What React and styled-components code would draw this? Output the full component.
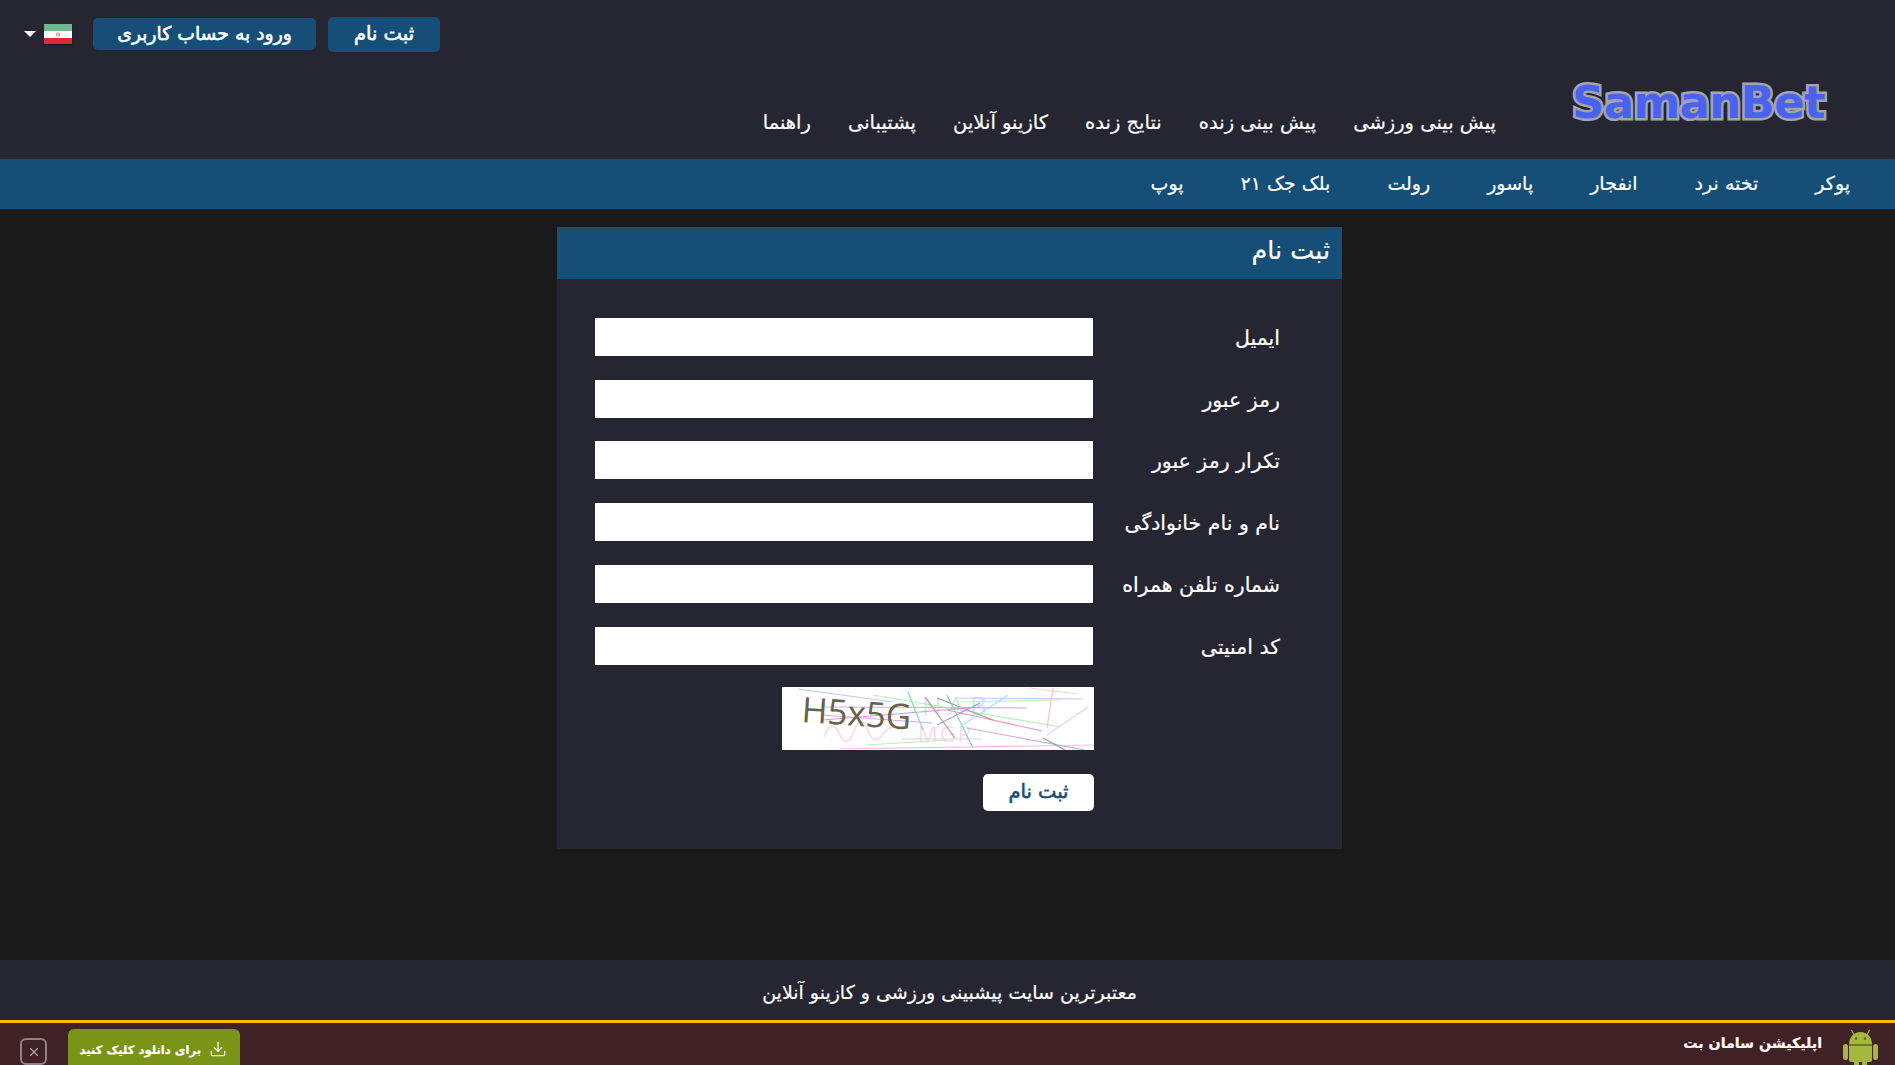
import React from 'react';
import styled, { createGlobalStyle } from 'styled-components';
import { Download, X } from 'lucide-react';

const GlobalStyle = createGlobalStyle`
  html, body {
    margin: 0;
    padding: 0;
    height: 100%;
    background: #1a1a1a;
    overflow: hidden;
  }
  * {
    box-sizing: border-box;
  }
  #root {
    height: 100%;
  }
`;

const Page = styled.div`
  display: flex;
  flex-direction: column;
  height: 100vh;
  direction: rtl;
  font-family: "DejaVu Sans", "Noto Sans", sans-serif;
  color: #fff;
  -webkit-text-stroke: 0.2px currentColor;
`;

const Header = styled.header`
  background: #262633;
  height: 159px;
  display: flex;
  flex-direction: column;
`;

const TopBar = styled.div`
  direction: ltr;
  display: flex;
  align-items: center;
  height: 68px;
  padding-left: 24px;
`;

const Caret = styled.span`
  width: 0;
  height: 0;
  border-left: 6px solid transparent;
  border-right: 6px solid transparent;
  border-top: 6px solid #fff;
  margin-right: 8px;
`;

const FlagIcon = styled.svg`
  width: 28px;
  height: 20px;
  margin-right: 21px;
  box-shadow: 0 1px 1px rgba(0, 0, 0, 0.4);
`;

const TopButton = styled.a`
  direction: rtl;
  display: flex;
  align-items: center;
  justify-content: center;
  width: ${props => props.$w}px;
  height: ${props => props.$h}px;
  margin-right: ${props => props.$gap}px;
  padding-bottom: 2px;
  background: #154f78;
  border-radius: 5px;
  font-size: ${props => props.$size}px;
  -webkit-text-stroke: 0.6px #fff;
`;

const MainRow = styled.div`
  display: flex;
  align-items: flex-start;
  height: 91px;
  padding-right: 67px;
`;

const Logo = styled.div`
  direction: ltr;
  width: 256px;
  margin-top: 12px;
  font-size: 45px;
  line-height: 46px;
  font-weight: 700;
  letter-spacing: -0.7px;
  color: #4a63ee;
  -webkit-text-stroke: 5px #a3a3ae;
  paint-order: stroke fill;
`;

const MainNav = styled.nav`
  display: flex;
  gap: 37px;
  margin-right: 76px;
  margin-top: 41px;
  font-size: 19.5px;
  line-height: 28px;
`;

const SubNav = styled.nav`
  display: flex;
  align-items: center;
  gap: 57px;
  height: 50px;
  padding: 0 45px 2px 0;
  background: #154f78;
  font-size: 19px;
`;

const Main = styled.main`
  flex: 1;
  display: flex;
  justify-content: center;
  align-items: flex-start;
  padding: 18px 0 0 4px;
`;

const Panel = styled.section`
  width: 785px;
  height: 622px;
  background: #262633;
`;

const PanelTitle = styled.h1`
  margin: 0;
  height: 52px;
  padding: 0 12px;
  background: #154f78;
  font-size: 25.5px;
  font-weight: 400;
  line-height: 46px;
`;

const Form = styled.form`
  display: flex;
  flex-direction: column;
  padding: 38.9px 62px 0 0;
`;

const Row = styled.label`
  display: flex;
  align-items: center;
  height: 38px;
  margin-bottom: 23.75px;
`;

const RowLabel = styled.span`
  width: 187px;
  padding-top: 2px;
  font-size: 20.5px;
`;

const Input = styled.input`
  width: 498px;
  height: 38px;
  border: 0;
  background: #fff;
`;

const CaptchaRow = styled.div`
  display: flex;
  padding-right: 186px;
  margin: -1.4px 0 24px;
`;

const CaptchaImage = styled.svg`
  display: block;
  width: 312px;
  height: 63px;
  background: #fff;
  -webkit-text-stroke: 0;
`;

const SubmitRow = styled.div`
  padding-right: 186px;
`;

const Submit = styled.button`
  width: 111px;
  height: 37px;
  padding: 0 0 3px;
  border: 0;
  border-radius: 5px;
  background: #fff;
  color: #154f78;
  font-family: inherit;
  font-size: 19.5px;
  -webkit-text-stroke: 0.6px #154f78;
`;

const Footer = styled.footer`
  background: #262633;
  height: 60px;
  display: flex;
  align-items: center;
  justify-content: center;
  padding: 4px 0 0 4px;
  font-size: 19px;
`;

const AppBar = styled.div`
  flex: none;
  height: 45px;
  border-top: 3px solid #ffb900;
  background: #3f2126;
  display: flex;
  overflow: hidden;
  padding: 0 17px 0 20px;
`;

const AppIcon = styled.svg`
  flex: none;
  width: 35px;
  height: 39px;
  margin-top: 3px;
`;

const AppName = styled.div`
  margin-right: 21px;
  margin-top: 7px;
  font-size: 14.2px;
  line-height: 26px;
  font-weight: 700;
`;

const Spacer = styled.div`
  flex: 1;
`;

const DownloadButton = styled.a`
  display: flex;
  align-items: flex-start;
  gap: 8px;
  width: 172px;
  height: 48px;
  margin-top: 6px;
  padding: 11px 13px 0 0;
  border-radius: 6px;
  background: #7a9418;
  font-size: 11.6px;
  font-weight: 700;
  line-height: 20px;
  white-space: nowrap;
`;

const CloseButton = styled.span`
  display: flex;
  align-items: center;
  justify-content: center;
  width: 27px;
  height: 27px;
  margin: 15px 21px 0 0;
  border: 2px solid #8c8488;
  border-radius: 6px;
  color: #a9a2a5;
`;

const mainLinks = ['پیش بینی ورزشی', 'پیش بینی زنده', 'نتایج زنده', 'کازینو آنلاین', 'پشتیبانی', 'راهنما'];
const gameLinks = ['پوکر', 'تخته نرد', 'انفجار', 'پاسور', 'رولت', 'بلک جک ۲۱', 'پوپ'];
const fields = ['ایمیل', 'رمز عبور', 'تکرار رمز عبور', 'نام و نام خانوادگی', 'شماره تلفن همراه', 'کد امنیتی'];

const noise = [
  [16, 2, 111, 15, '#b9cdf0'],
  [91, 8, 278, 40, '#b8f0b8'],
  [178, 15, 278, 13, '#c4f0c4'],
  [175, 11, 301, 12, '#c8c8f4'],
  [165, 23, 260, 44, '#ff90b0'],
  [271, 1, 265, 41, '#ffc0c8'],
  [306, 20, 265, 48, '#dcd4fb'],
  [58, 62, 312, 58, '#ffb8e0'],
  [185, 41, 303, 63, '#d0a8e0'],
  [126, 5, 141, 43, '#80d8c8'],
  [143, 10, 173, 51, '#c09090'],
  [165, 8, 191, 61, '#90d0c0'],
  [226, 8, 178, 40, '#a0e8e8'],
  [155, 38, 198, 16, '#a0a0d0'],
  [155, 11, 211, 33, '#a0a0a0'],
  [85, 58, 165, 53, '#b8f0b8'],
  [41, 20, 245, 21, '#d0b0f0'],
  [41, 33, 198, 20, '#e090e0'],
  [248, 1, 295, 7, '#ffd0c8'],
  [261, 51, 283, 63, '#80b0a0'],
  [120, 52, 200, 52, '#d8d8d8'],
  [40, 28, 150, 36, '#d0a8f0'],
];

function Flag() {
  return (
    <FlagIcon viewBox="0 0 28 20">
      <rect width="28" height="7" fill="#72b88e" />
      <rect y="7" width="28" height="7" fill="#fff" />
      <rect y="14" width="28" height="6" fill="#dd2a2e" />
      <path d="M14 8v5M12.5 9v3M15.5 9v3" stroke="#eb9aa0" strokeWidth="1.2" />
    </FlagIcon>
  );
}

function AndroidIcon() {
  return (
    <AppIcon viewBox="0 0 35 39">
      <path d="M11 9L8.5 4M24 9l2.5-5" stroke="#a3b83c" strokeWidth="1.2" />
      <g fill="#a3b83c">
        <path d="M6 18c0-7 5-12 11.5-12S29 11 29 18z" />
        <path d="M6 20h23v14a2 2 0 0 1-2 2H8a2 2 0 0 1-2-2z" />
        <rect x="0" y="18" width="5" height="16" rx="2.5" />
        <rect x="30" y="18" width="5" height="16" rx="2.5" />
        <rect x="11" y="34" width="5" height="8" rx="2.5" />
        <rect x="19" y="34" width="5" height="8" rx="2.5" />
      </g>
      <rect x="6" y="18" width="23" height="2" fill="#6f7a24" />
      <circle cx="13" cy="12.5" r="1.2" fill="#5a5a20" />
      <circle cx="22" cy="12.5" r="1.2" fill="#5a5a20" />
    </AppIcon>
  );
}

function Captcha() {
  return (
    <CaptchaImage viewBox="0 0 312 63">
      <text direction="ltr" x="140" y="28" fontFamily="Open Sans, sans-serif" fontSize="26" letterSpacing="6" fill="#d4e4f2">
        NAB
      </text>
      <text direction="ltr" x="136" y="55" fontFamily="Open Sans, sans-serif" fontSize="22" letterSpacing="2" fill="#fbdcec">
        MGR
      </text>
      <path d="M42 50c6-16 12-12 16-2s10 8 14-4 10-12 14 0 10 10 16 2 10-6 16-4" fill="none" stroke="#fbdcec" strokeWidth="2" />
      {noise.map(([x1, y1, x2, y2, color], i) => (
        <line key={i} x1={x1} y1={y1} x2={x2} y2={y2} stroke={color} strokeWidth="1.2" />
      ))}
      <text direction="ltr" x="19" y="35" fontFamily="Open Sans, sans-serif" fontSize="35" fill="#66634a" transform="rotate(4 19 35)">
        H5x5G
      </text>
    </CaptchaImage>
  );
}

export default function App() {
  return (
    <Page>
      <GlobalStyle />
      <Header>
        <TopBar>
          <Caret />
          <Flag />
          <TopButton $w={223} $h={32} $gap={12} $size={18.8}>ورود به حساب کاربری</TopButton>
          <TopButton $w={112} $h={35} $gap={0} $size={19.5}>ثبت نام</TopButton>
        </TopBar>
        <MainRow>
          <Logo>SamanBet</Logo>
          <MainNav>
            {mainLinks.map(link => <a key={link}>{link}</a>)}
          </MainNav>
        </MainRow>
      </Header>
      <SubNav>
        {gameLinks.map(link => <a key={link}>{link}</a>)}
      </SubNav>
      <Main>
        <Panel>
          <PanelTitle>ثبت نام</PanelTitle>
          <Form>
            {fields.map(field => (
              <Row key={field}>
                <RowLabel>{field}</RowLabel>
                <Input />
              </Row>
            ))}
            <CaptchaRow>
              <Captcha />
            </CaptchaRow>
            <SubmitRow>
              <Submit type="button">ثبت نام</Submit>
            </SubmitRow>
          </Form>
        </Panel>
      </Main>
      <Footer>معتبرترین سایت پیشبینی ورزشی و کازینو آنلاین</Footer>
      <AppBar>
        <AndroidIcon />
        <AppName>اپلیکیشن سامان بت</AppName>
        <Spacer />
        <DownloadButton>
          <Download size={18} strokeWidth={1.6} />
          برای دانلود کلیک کنید
        </DownloadButton>
        <CloseButton>
          <X size={14} strokeWidth={2} />
        </CloseButton>
      </AppBar>
    </Page>
  );
}
